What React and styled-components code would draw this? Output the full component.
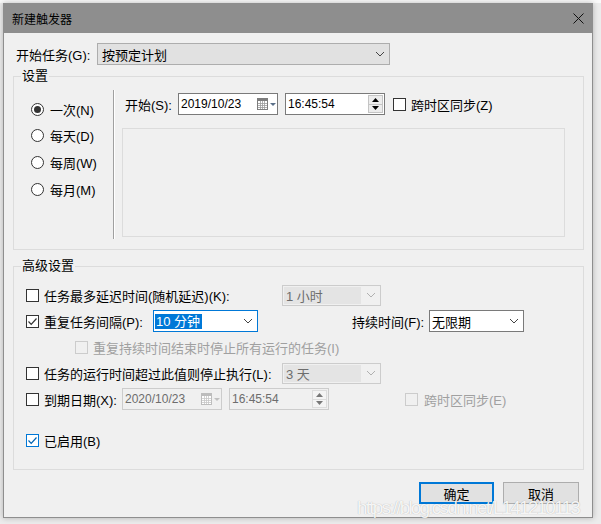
import styled, { createGlobalStyle } from "styled-components";

const GlobalStyle = createGlobalStyle`
  html, body {
    margin: 0;
    padding: 0;
  }
  body {
    background: #ececec;
    font-family: "Liberation Sans", "Noto Sans CJK SC", sans-serif;
    font-size: 13px;
    color: #000;
  }
`;

const Page = styled.div`
  position: relative;
  width: 601px;
  height: 524px;
  padding: 3px 0 0 3px;
  box-sizing: border-box;
  overflow: hidden;
  background: linear-gradient(#fafafa 0 3px, #ececec 3px);
`;

const Dialog = styled.div`
  width: 590px;
  height: 515px;
  box-sizing: border-box;
  border: 1px solid #8e8e8e;
  background: #f0f0f0;
  display: flex;
  flex-direction: column;
  box-shadow: 0 0 6px rgba(0, 0, 0, 0.25);
`;

const TitleBar = styled.div`
  height: 29px;
  background: #8e8e8e;
  display: flex;
  align-items: center;
  justify-content: space-between;
  padding-left: 8px;
  font-size: 12px;
`;

const CloseButton = styled.div`
  width: 28px;
  height: 29px;
  display: flex;
  align-items: center;
  justify-content: center;
`;

const Body = styled.div`
  padding: 10px 8px 0 9px;
  display: flex;
  flex-direction: column;
`;

const TopRow = styled.div`
  display: flex;
  align-items: center;
  height: 22px;
  padding-left: 3px;
`;

const Label = styled.span`
  white-space: nowrap;
  flex-shrink: 0;
  width: ${(p) => (p.$w ? `${p.$w}px` : "auto")};
  margin-left: ${(p) => p.$ml || 0}px;
  color: ${(p) => (p.$disabled ? "#a0a0a0" : "#000")};
`;

const GroupBox = styled.fieldset`
  margin: ${(p) => p.$mt}px 0 0 0;
  padding: 0;
  min-width: 0;
  border: 1px solid #dcdcdc;
`;

const Legend = styled.legend`
  margin-left: 7px;
  padding: 0 1px;
  line-height: 18px;
`;

const SettingsInner = styled.div`
  display: flex;
  align-items: flex-start;
  padding: 5px 0 10px 0;
`;

const RadioColumn = styled.div`
  width: 99px;
  padding: 6px 0 0 17px;
  box-sizing: border-box;
  display: flex;
  flex-direction: column;
`;

const RadioRow = styled.div`
  height: 26.6px;
  display: flex;
  align-items: center;
  gap: 6px;
`;

const Radio = styled.span`
  width: 13px;
  height: 13px;
  box-sizing: border-box;
  border: 1px solid #333;
  border-radius: 50%;
  background: #fff;
  display: flex;
  align-items: center;
  justify-content: center;
  flex-shrink: 0;

  &::after {
    content: "";
    width: 7px;
    height: 7px;
    border-radius: 50%;
    background: ${(p) => (p.$checked ? "#333" : "transparent")};
  }
`;

const Separator = styled.div`
  width: 1px;
  height: 149px;
  background: #a0a0a0;
  border-right: 1px solid #fff;
  flex-shrink: 0;
`;

const SchedulePanel = styled.div`
  margin-left: 7px;
  padding-top: 3px;
  display: flex;
  flex-direction: column;
`;

const Row = styled.div`
  display: flex;
  align-items: center;
  height: ${(p) => p.$h || 26}px;
  margin-top: ${(p) => p.$mt || 0}px;
  padding-left: ${(p) => p.$pl || 0}px;
`;

const InnerPanel = styled.div`
  margin-top: 13px;
  width: 443px;
  height: 109px;
  box-sizing: border-box;
  border: 1px solid #dcdcdc;
`;

const AdvancedInner = styled.div`
  display: flex;
  flex-direction: column;
  padding: 7px 0 16px 12px;
`;

const Field = styled.div`
  box-sizing: border-box;
  width: ${(p) => p.$w}px;
  height: ${(p) => p.$h || 22}px;
  margin-left: ${(p) => p.$ml || 0}px;
  flex-shrink: 0;
  display: flex;
  align-items: center;
  padding-left: ${(p) => (p.$pl ?? 2)}px;
  border: 1px solid
    ${(p) =>
      p.$focus
        ? "#0078d7"
        : p.$variant === "button"
        ? "#adadad"
        : p.$disabled
        ? "#cccccc"
        : "#7a7a7a"};
  background: ${(p) =>
    p.$variant === "button" ? "#e1e1e1" : p.$disabled ? "#f0f0f0" : "#fff"};
  color: ${(p) => (p.$disabled ? "#6d6d6d" : "#000")};
`;

const Value = styled.span`
  flex: 1;
  white-space: nowrap;
  font-size: ${(p) => p.$size || 13}px;
`;

const Selected = styled.span`
  background: #0078d7;
  color: #fff;
  padding: 0 2px 0 1px;
  line-height: 17px;
  white-space: nowrap;
`;

const DisabledFill = styled.span`
  flex: 1;
  height: 17px;
  display: flex;
  align-items: center;
  padding-left: 2px;
  background: #e4e4e4;
  white-space: nowrap;
`;

const ChevronSlot = styled.span`
  width: 19px;
  display: flex;
  justify-content: center;
  flex-shrink: 0;
`;

const SpinBox = styled.div`
  width: 15px;
  height: 18px;
  margin-right: 1px;
  display: flex;
  flex-direction: column;
  flex-shrink: 0;
`;

const SpinButton = styled.div`
  flex: 1;
  box-sizing: border-box;
  border: 1px solid ${(p) => (p.$disabled ? "#dcdcdc" : "#c4c4c4")};
  background: ${(p) => (p.$disabled ? "#f4f4f4" : "#ececec")};
  display: flex;
  align-items: center;
  justify-content: center;
  & + & {
    border-top: none;
  }
`;

const CheckBox = styled.span`
  width: 13px;
  height: 13px;
  box-sizing: border-box;
  flex-shrink: 0;
  margin-left: ${(p) => p.$ml || 0}px;
  margin-right: ${(p) => p.$mr ?? 5}px;
  border: 1px solid
    ${(p) => (p.$blue ? "#0078d7" : p.$disabled ? "#cccccc" : "#333")};
  background: ${(p) => (p.$disabled ? "transparent" : "#fff")};
  display: flex;
  align-items: center;
  justify-content: center;
`;

const Footer = styled.div`
  display: flex;
  justify-content: flex-end;
  gap: 9px;
  padding: 12px 13px 0 0;
`;

const Button = styled.div`
  width: ${(p) => p.$w}px;
  height: 22px;
  box-sizing: border-box;
  border: ${(p) => (p.$primary ? "2px solid #0078d7" : "1px solid #adadad")};
  background: #e1e1e1;
  display: flex;
  align-items: center;
  justify-content: center;
`;

const Watermark = styled.div`
  position: absolute;
  left: 357px;
  top: 497px;
  font-family: "Liberation Sans", sans-serif;
  font-size: 19px;
  line-height: 22px;
  letter-spacing: -1.8px;
  color: rgba(255, 255, 255, 0.9);
  text-shadow: 0 0 1px rgba(0, 0, 0, 0.3);
  white-space: nowrap;
  pointer-events: none;
`;

function Chevron({ disabled }) {
  return (
    <svg width="10" height="6" viewBox="0 0 10 6">
      <path
        d="M1 1 L5 5 L9 1"
        fill="none"
        stroke={disabled ? "#b0b0b0" : "#444"}
        strokeWidth="1"
      />
    </svg>
  );
}

function Check({ color = "#333" }) {
  return (
    <svg width="11" height="11" viewBox="0 0 11 11">
      <path d="M1.5 5.5 L4.2 8.3 L9.5 2.5" fill="none" stroke={color} strokeWidth="1.2" />
    </svg>
  );
}

function CalendarIcon({ disabled }) {
  const line = disabled ? "#c8c8c8" : "#9a9a9a";
  const edge = disabled ? "#bdbdbd" : "#7d7d7d";
  return (
    <svg width="20" height="12" viewBox="0 0 20 12">
      <rect x="0.5" y="0.5" width="10" height="11" fill="#fff" stroke={edge} />
      <rect x="1" y="1" width="9" height="2" fill={edge} />
      <path d="M3.5 3 V11 M5.5 3 V11 M7.5 3 V11 M1 5.5 H10 M1 7.5 H10 M1 9.5 H10" stroke={line} strokeWidth="0.8" />
      <path d="M13 5 H19 L16 8 Z" fill={disabled ? "#c0c0c0" : "#5a6f88"} />
    </svg>
  );
}

function Triangle({ up, disabled }) {
  return (
    <svg width="7" height="4" viewBox="0 0 7 4">
      <path d={up ? "M0 4 L3.5 0 L7 4 Z" : "M0 0 L7 0 L3.5 4 Z"} fill={disabled ? "#777" : "#000"} />
    </svg>
  );
}

function DateField({ value, disabled, ml }) {
  return (
    <Field $w={100} $ml={ml} $disabled={disabled}>
      <Value $size={12}>{value}</Value>
      <CalendarIcon disabled={disabled} />
    </Field>
  );
}

function TimeField({ value, disabled, ml }) {
  return (
    <Field $w={100} $ml={ml} $disabled={disabled}>
      <Value $size={12}>{value}</Value>
      <SpinBox>
        <SpinButton $disabled={disabled}>
          <Triangle up disabled={disabled} />
        </SpinButton>
        <SpinButton $disabled={disabled}>
          <Triangle disabled={disabled} />
        </SpinButton>
      </SpinBox>
    </Field>
  );
}

function DisabledCombo({ value }) {
  return (
    <Field $w={99} $h={21} $pl={1} $disabled>
      <DisabledFill>{value}</DisabledFill>
      <ChevronSlot>
        <Chevron disabled />
      </ChevronSlot>
    </Field>
  );
}

const radios = [
  { label: "一次(N)", checked: true },
  { label: "每天(D)" },
  { label: "每周(W)" },
  { label: "每月(M)" },
];

export default function App() {
  return (
    <Page>
      <GlobalStyle />
      <Dialog>
        <TitleBar>
          <span>新建触发器</span>
          <CloseButton>
            <svg width="11" height="11" viewBox="0 0 11 11">
              <path d="M0.5 0.5 L10.5 10.5 M10.5 0.5 L0.5 10.5" stroke="#111" strokeWidth="1" />
            </svg>
          </CloseButton>
        </TitleBar>

        <Body>
          <TopRow>
            <Label $w={81}>开始任务(G):</Label>
            <Field $w={293} $variant="button" $pl={4}>
              <Value>按预定计划</Value>
              <ChevronSlot>
                <Chevron />
              </ChevronSlot>
            </Field>
          </TopRow>

          <GroupBox $mt={2}>
            <Legend>设置</Legend>
            <SettingsInner>
              <RadioColumn>
                {radios.map((r) => (
                  <RadioRow key={r.label}>
                    <Radio $checked={r.checked} />
                    <span>{r.label}</span>
                  </RadioRow>
                ))}
              </RadioColumn>
              <Separator />
              <SchedulePanel>
                <Row $h={22} $pl={3}>
                  <Label $w={53}>开始(S):</Label>
                  <DateField value="2019/10/23" />
                  <TimeField value="16:45:54" ml={7} />
                  <CheckBox $ml={8} />
                  <Label>跨时区同步(Z)</Label>
                </Row>
                <InnerPanel />
              </SchedulePanel>
            </SettingsInner>
          </GroupBox>

          <GroupBox $mt={7}>
            <Legend>高级设置</Legend>
            <AdvancedInner>
              <Row>
                <CheckBox />
                <Label $w={238}>任务最多延迟时间(随机延迟)(K):</Label>
                <DisabledCombo value="1 小时" />
              </Row>
              <Row>
                <CheckBox>
                  <Check />
                </CheckBox>
                <Label $w={109}>重复任务间隔(P):</Label>
                <Field $w={105} $focus $pl={1}>
                  <Value>
                    <Selected>10 分钟</Selected>
                  </Value>
                  <ChevronSlot>
                    <Chevron />
                  </ChevronSlot>
                </Field>
                <Label $w={77} $ml={94}>持续时间(F):</Label>
                <Field $w={95}>
                  <Value>无限期</Value>
                  <ChevronSlot>
                    <Chevron />
                  </ChevronSlot>
                </Field>
              </Row>
              <Row>
                <CheckBox $disabled $ml={49} />
                <Label $disabled>重复持续时间结束时停止所有运行的任务(I)</Label>
              </Row>
              <Row>
                <CheckBox />
                <Label $w={238}>任务的运行时间超过此值则停止执行(L):</Label>
                <DisabledCombo value="3 天" />
              </Row>
              <Row>
                <CheckBox />
                <Label $w={78}>到期日期(X):</Label>
                <DateField value="2020/10/23" disabled />
                <TimeField value="16:45:54" disabled ml={7} />
                <CheckBox $disabled $ml={76} $mr={6} />
                <Label $disabled>跨时区同步(E)</Label>
              </Row>
              <Row $mt={15}>
                <CheckBox $blue>
                  <Check color="#0063b1" />
                </CheckBox>
                <Label>已启用(B)</Label>
              </Row>
            </AdvancedInner>
          </GroupBox>
        </Body>

        <Footer>
          <Button $w={75} $primary>
            确定
          </Button>
          <Button $w={76}>取消</Button>
        </Footer>
      </Dialog>
      <Watermark>https://blog.csdn.net/L141210113</Watermark>
    </Page>
  );
}
